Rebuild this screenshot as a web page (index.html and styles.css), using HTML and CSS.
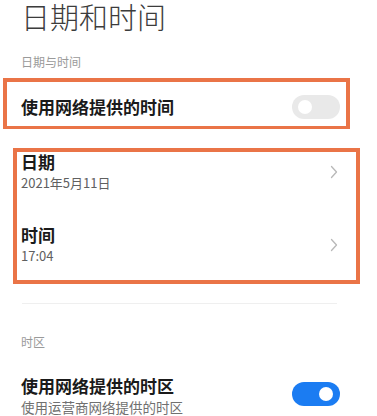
FILE: index.html
```html
<!DOCTYPE html>
<html lang="zh-CN">
<head>
<meta charset="utf-8">
<link rel="stylesheet" href="styles.css">
</head>
<body>
<div class="page">
  <h1 class="page-title">日期和时间</h1>
  <div class="section-label first">日期与时间</div>

  <div class="box box-one">
    <div class="row-switch">
      <span class="row-title">使用网络提供的时间</span>
      <span class="toggle off"><span class="knob"></span></span>
    </div>
  </div>

  <div class="box box-two">
    <div class="row-nav">
      <div class="row-text">
        <div class="row-title">日期</div>
        <div class="row-sub">2021年5月11日</div>
      </div>
      <svg class="chev" width="8" height="14" viewBox="0 0 8 14"><path d="M1.5 1.5 L6.5 7 L1.5 12.5" fill="none" stroke="#b8b8b8" stroke-width="1.3" stroke-linecap="round" stroke-linejoin="round"/></svg>
    </div>
    <div class="row-nav second">
      <div class="row-text">
        <div class="row-title">时间</div>
        <div class="row-sub">17:04</div>
      </div>
      <svg class="chev" width="8" height="14" viewBox="0 0 8 14"><path d="M1.5 1.5 L6.5 7 L1.5 12.5" fill="none" stroke="#b8b8b8" stroke-width="1.3" stroke-linecap="round" stroke-linejoin="round"/></svg>
    </div>
  </div>

  <div class="divider"></div>

  <div class="section-label tz">时区</div>

  <div class="row-zone">
    <div class="row-text">
      <div class="row-title">使用网络提供的时区</div>
      <div class="row-sub big">使用运营商网络提供的时区</div>
    </div>
    <span class="toggle on"><span class="knob"></span></span>
  </div>
</div>
</body>
</html>
```

FILE: styles.css
```css
html, body {
  margin: 0;
  padding: 0;
  background: #ffffff;
}
body {
  font-family: "Noto Sans CJK SC", "Noto Sans", sans-serif;
  color: #1a1a1a;
}
.page {
  width: 377px;
  height: 416px;
  overflow: hidden;
  position: relative;
}
.page-title {
  margin: 0;
  padding-left: 21px;
  font-size: 29px;
  line-height: 32px;
  font-weight: 300;
  color: #3c3c3c;
}
.section-label {
  font-size: 12px;
  line-height: 16px;
  color: #9a9a9a;
  padding-left: 21px;
}
.section-label.first {
  margin-top: 22px;
}
.box {
  box-sizing: border-box;
  border: 4px solid #ea7447;
  width: 347px;
}
.box-one {
  margin-top: 8px;
  margin-left: 3px;
  height: 51px;
  border-bottom-width: 3px;
}
.row-switch {
  display: flex;
  align-items: center;
  justify-content: space-between;
  height: 44px;
  padding: 5px 6px 0 14px;
  box-sizing: border-box;
}
.row-title {
  font-size: 17px;
  line-height: 20px;
  font-weight: 700;
  color: #1a1a1a;
}
.row-sub {
  margin-top: 2px;
  font-size: 13px;
  line-height: 18px;
  color: #606060;
}
.row-sub.big {
  font-size: 13.5px;
  color: #707070;
}
.toggle {
  display: flex;
  align-items: center;
  box-sizing: border-box;
  width: 48px;
  height: 24px;
  border-radius: 12px;
  padding: 0 6px;
}
.toggle .knob {
  width: 14px;
  height: 14px;
  border-radius: 50%;
  background: #ffffff;
}
.toggle.off {
  background: #e9e9e9;
  justify-content: flex-start;
}
.toggle.on {
  background: #1b7cf2;
  justify-content: flex-end;
  padding-right: 7px;
}
.box-two {
  margin-top: 19px;
  margin-left: 13px;
  height: 136px;
  padding: 0 18px 0 4px;
}
.row-nav {
  display: flex;
  align-items: center;
  justify-content: space-between;
}
.row-nav.second {
  margin-top: 33px;
}
.chev {
  display: block;
}
.divider {
  margin-top: 19px;
  margin-left: 22px;
  width: 315px;
  height: 1px;
  background: #efefef;
}
.section-label.tz {
  margin-top: 30px;
}
.row-zone {
  margin-top: 26px;
  display: flex;
  align-items: center;
  justify-content: space-between;
  padding: 0 37px 0 21px;
}
.row-zone .toggle {
  margin-bottom: 4px;
}
```
